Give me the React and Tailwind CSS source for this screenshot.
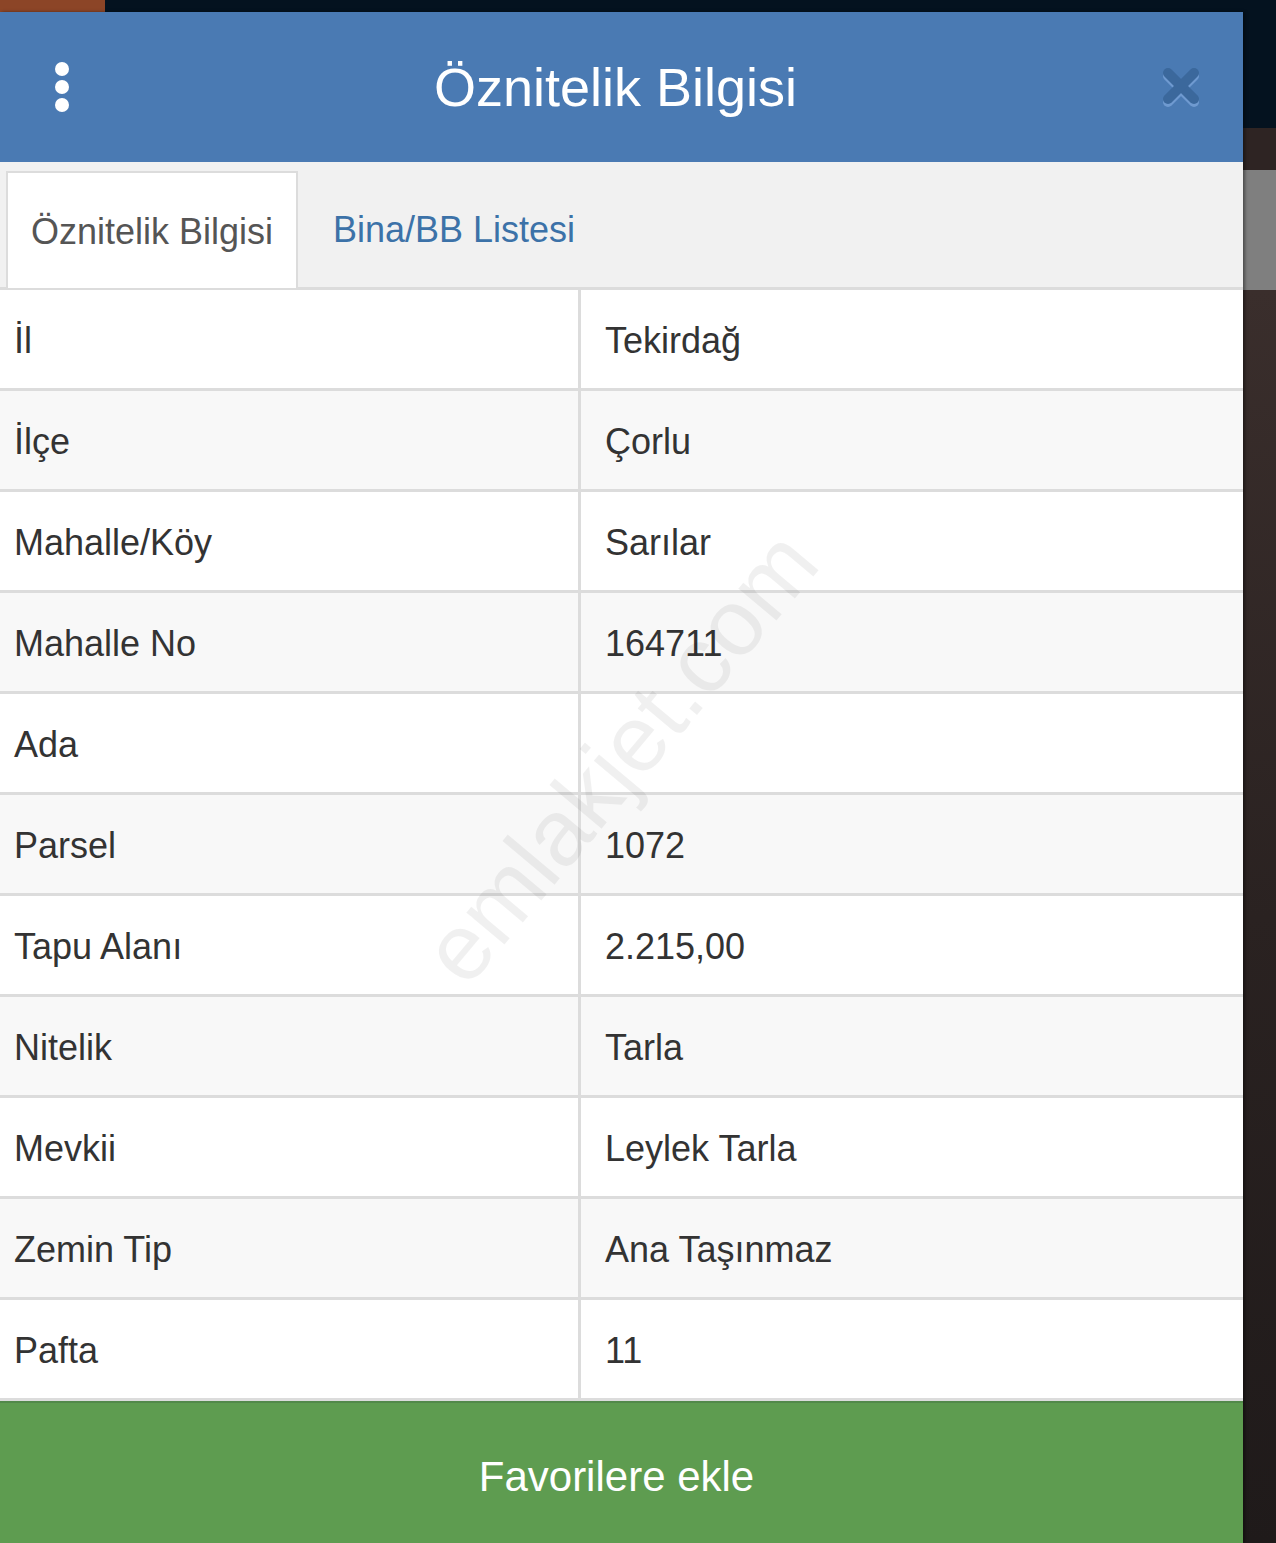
import React from "react";

const rows = [
  ["İl", "Tekirdağ"],
  ["İlçe", "Çorlu"],
  ["Mahalle/Köy", "Sarılar"],
  ["Mahalle No", "164711"],
  ["Ada", ""],
  ["Parsel", "1072"],
  ["Tapu Alanı", "2.215,00"],
  ["Nitelik", "Tarla"],
  ["Mevkii", "Leylek Tarla"],
  ["Zemin Tip", "Ana Taşınmaz"],
  ["Pafta", "11"],
];

export default function App() {
  return (
    <div
      className="w-[1276px] h-[1543px] overflow-hidden flex flex-col bg-[#241d1d]"
      style={{ fontFamily: '"Liberation Sans", Arial, sans-serif' }}
    >
      <div className="h-[12px] flex shrink-0">
        <div className="w-[105px] bg-[#8c4527]" />
        <div className="flex-1 bg-[#04121f]" />
      </div>
      <div className="flex flex-1 min-h-0">
        <div className="w-[1243px] flex flex-col relative shadow-[2px_0_3px_rgba(0,0,0,0.4)]">
          {/* header */}
          <div className="h-[150px] bg-[#4a7ab3] flex items-center pl-[55px] pr-[43px] shrink-0">
            <div className="w-[14px] flex flex-col items-center gap-[4px]">
              <div className="w-[14px] h-[14px] rounded-full bg-white" />
              <div className="w-[14px] h-[14px] rounded-full bg-white" />
              <div className="w-[14px] h-[14px] rounded-full bg-white" />
            </div>
            <div className="flex-1 text-center text-white text-[54px] leading-none">
              Öznitelik Bilgisi
            </div>
            <svg width="38" height="40" viewBox="0 0 38 40" className="block">
              <g strokeLinecap="round" strokeWidth="10">
                <line x1="6" y1="9" x2="32" y2="35" stroke="#6f9ad0" />
                <line x1="32" y1="9" x2="6" y2="35" stroke="#6f9ad0" />
                <line x1="6" y1="6" x2="32" y2="32" stroke="#3b689c" />
                <line x1="32" y1="6" x2="6" y2="32" stroke="#3b689c" />
              </g>
            </svg>
          </div>
          {/* tabs */}
          <div className="h-[128px] bg-[#f1f1f1] border-b-[3px] border-[#dcdcdc] flex items-end pl-[6px] shrink-0">
            <div className="w-[292px] h-[117px] -mb-[1px] bg-white border-[2px] border-[#dcdcdc] border-b-0 flex items-center justify-center pt-[2px] text-[#555] text-[36px]">
              Öznitelik Bilgisi
            </div>
            <div className="h-[117px] flex items-center pl-[35px] pt-[2px] text-[#3c72a8] text-[36px]">
              Bina/BB Listesi
            </div>
          </div>
          {/* rows */}
          <div className="flex flex-col shrink-0">
            {rows.map(([k, v], i) => (
              <div
                key={k}
                className={
                  "h-[101px] flex border-b-[3px] border-[#dcdcdc] text-[#333] text-[36px] " +
                  (i % 2 === 0 ? "bg-white" : "bg-[#f8f8f8]")
                }
              >
                <div className="w-[581px] border-r-[3px] border-[#dcdcdc] flex items-center pl-[14px] pt-[3px]">
                  {k}
                </div>
                <div className="flex-1 flex items-center pl-[24px] pt-[3px]">{v}</div>
              </div>
            ))}
          </div>
          {/* button */}
          <div className="flex-1 bg-[#5e9c50] border-t-[2px] border-[#52894a] flex items-center justify-center pr-[10px] pt-[6px] text-white text-[42px]">
            Favorilere ekle
          </div>
          {/* watermark */}
          <div className="absolute left-[620px] top-[745px] pointer-events-none">
            <div className="-translate-x-1/2 -translate-y-1/2 -rotate-[50deg] text-[94px] leading-none text-black/[0.06] whitespace-nowrap">
              emlakjet.com
            </div>
          </div>
        </div>
        {/* right background */}
        <div className="flex-1 flex flex-col">
          <div className="h-[116px] bg-[#04121f]" />
          <div className="h-[42px] bg-[#2e2423]" />
          <div className="h-[120px] bg-[#7f7f7f]" />
          <div className="flex-1 bg-gradient-to-b from-[#3a2e2c] via-[#2a2221] to-[#1f1a1a]" />
        </div>
      </div>
    </div>
  );
}
